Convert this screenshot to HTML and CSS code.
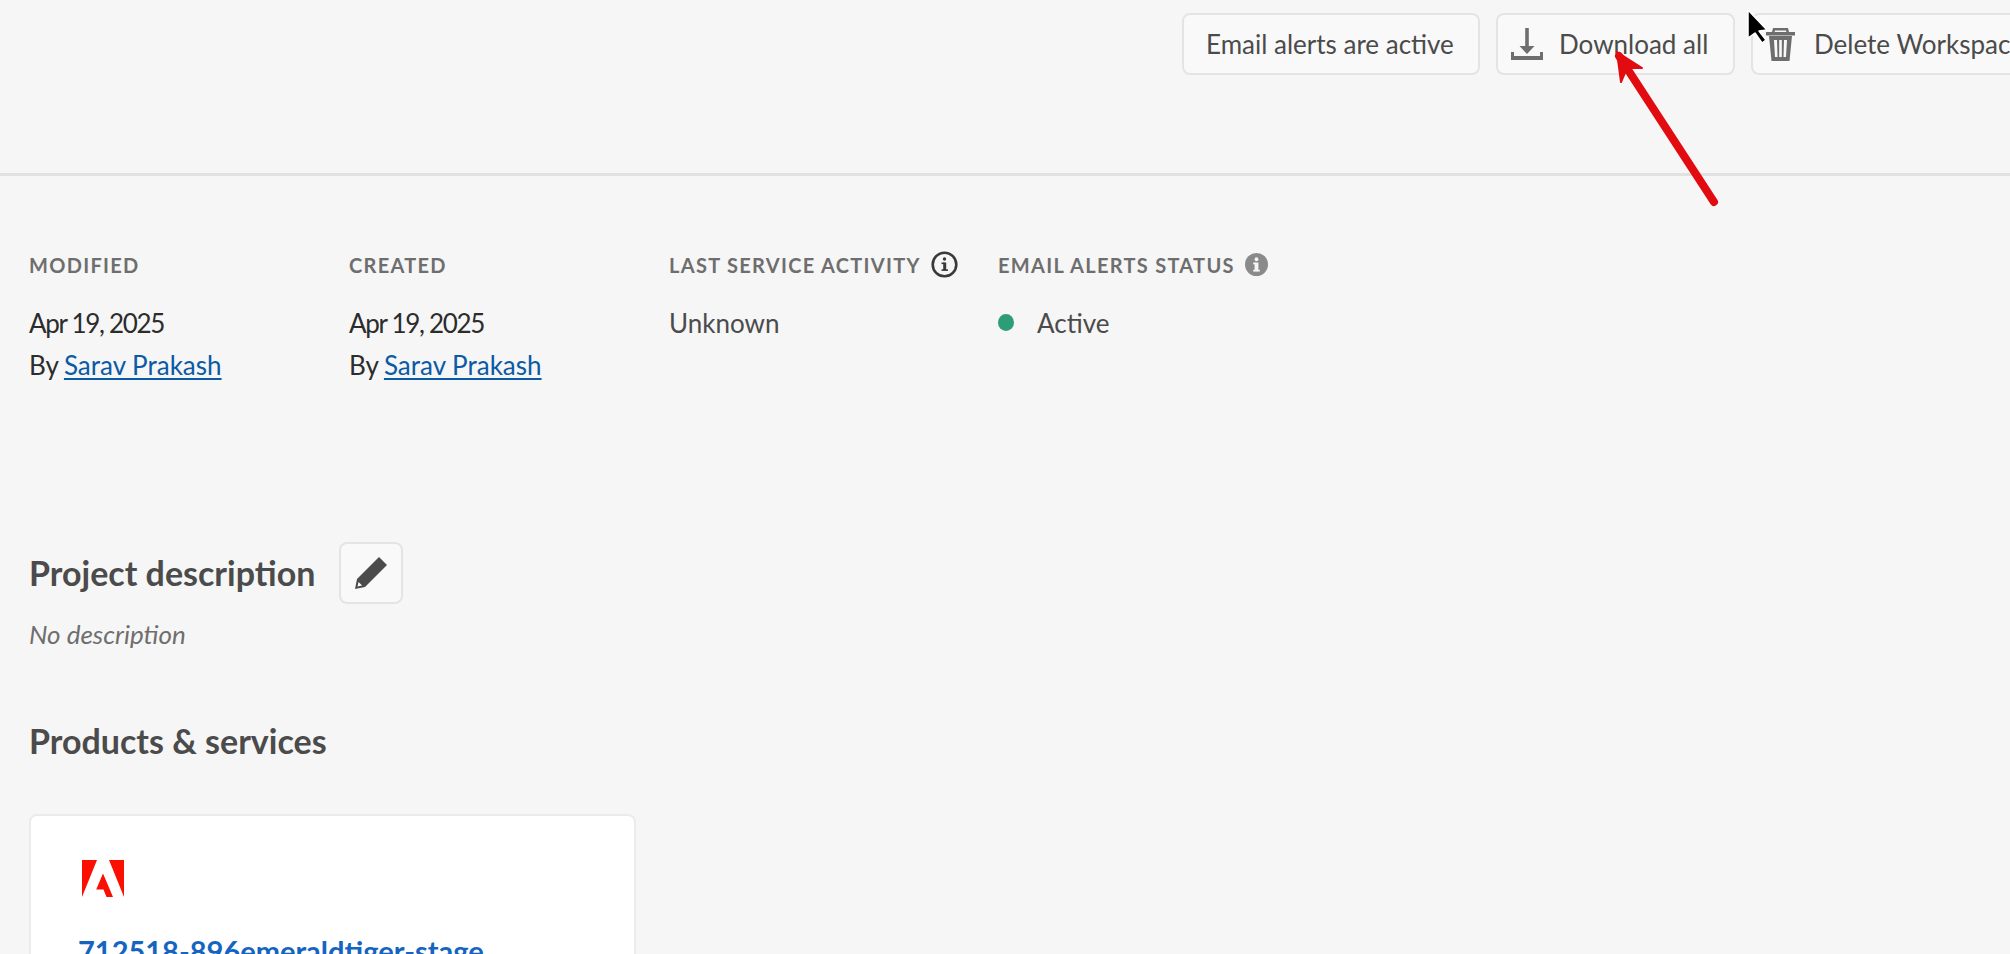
FILE: index.html
```html
<!DOCTYPE html>
<html lang="en">
<head>
<meta charset="utf-8">
<title>Workspace</title>
<link rel="stylesheet" href="styles.css">
</head>
<body>
<div class="page">
  <header class="toolbar">
    <button class="btn btn-alerts">Email alerts are active</button>
    <button class="btn btn-download">
      <svg class="icon-download" viewBox="0 0 32 32"><rect x="14.200" y="0" width="3.600" height="20"/><polygon points="8.500,18 23.500,18 16,26"/><path d="M0 24h3v4h26v-4h3v8H0z"/></svg>
      <span>Download all</span>
    </button>
    <button class="btn btn-delete">
      <svg class="icon-trash" viewBox="0 0 29 33"><path fill-rule="evenodd" d="M7 0h15l1 4h6v3.500H0V4h6zM9 2.500l-.4 1.500h11.800l-.4-1.500z"/><path fill-rule="evenodd" d="M3 8h23l-2.500 25H5.500zM8 12l1 17h2.500L11 12zM13.200 12v17h2.600V12zM18 12l-.5 17H20l1-17z"/></svg>
      <span>Delete Workspace</span>
    </button>
  </header>

  <section class="meta">
    <div class="meta-col">
      <div class="meta-label">MODIFIED</div>
      <div class="meta-value dark date">Apr 19, 2025</div>
      <div class="meta-value dark">By <a class="person" href="#">Sarav Prakash</a></div>
    </div>
    <div class="meta-col">
      <div class="meta-label">CREATED</div>
      <div class="meta-value dark date">Apr 19, 2025</div>
      <div class="meta-value dark">By <a class="person" href="#">Sarav Prakash</a></div>
    </div>
    <div class="meta-col">
      <div class="meta-label">LAST SERVICE ACTIVITY
        <svg class="icon-info" viewBox="0 0 27 27"><circle cx="13.500" cy="13.500" r="11.800" fill="none" stroke="#3a3a3a" stroke-width="2.600"/><rect x="12.200" y="11.500" width="3" height="8" fill="#3a3a3a"/><rect x="10.500" y="11.500" width="3" height="1.600" fill="#3a3a3a"/><rect x="10.500" y="18.300" width="6.500" height="1.600" fill="#3a3a3a"/><circle cx="13.500" cy="8" r="1.700" fill="#3a3a3a"/></svg>
      </div>
      <div class="meta-value">Unknown</div>
    </div>
    <div class="meta-col">
      <div class="meta-label">EMAIL ALERTS STATUS
        <svg class="icon-info-solid" viewBox="0 0 24 24"><circle cx="12" cy="12" r="12" fill="#8a8a8a"/><rect x="10" y="10" width="4" height="9" fill="#f6f6f6"/><rect x="8.500" y="10" width="3" height="1.800" fill="#f6f6f6"/><rect x="8.500" y="17.500" width="7" height="1.800" fill="#f6f6f6"/><circle cx="12" cy="6.500" r="2" fill="#f6f6f6"/></svg>
      </div>
      <div class="meta-value status"><span class="dot"></span>Active</div>
    </div>
  </section>

  <section class="content">
    <div class="desc-head">
      <h2 class="heading">Project description</h2>
      <button class="btn-edit" aria-label="Edit">
        <svg class="icon-pencil" viewBox="0 0 32 32"><path fill-rule="evenodd" d="M24 0l8 8L10 30 0 32l2-10zM3.600 25l-1.100 4.500 4.600-1z"/></svg>
      </button>
    </div>
    <p class="no-desc">No description</p>
    <h2 class="heading products">Products &amp; services</h2>
    <article class="card">
      <svg class="logo" viewBox="0 0 42 37"><path fill="#fa0f00" d="M15 0H0v37zM27 0h15v37zM21 13.500 31 37h-6.500l-3-7.500h-7.300z"/></svg>
      <a class="card-title" href="#">712518-896emeraldtiger-stage</a>
    </article>
  </section>

  <svg class="annotation" viewBox="0 0 2010 954" width="2010" height="954">
    <path d="M1714 202 L1619 56" fill="none" stroke="#e20c10" stroke-width="8" stroke-linecap="round"/>
    <path d="M1617 52 L1621 82 L1627 68 L1642 68 Z" fill="#e20c10" stroke="#e20c10" stroke-width="2" stroke-linejoin="round"/>
    <path d="M1748 10 L1748 38 L1755 33 L1762 43 L1766 40 L1759 31 L1767 30 Z" fill="#000" stroke="#fff" stroke-width="1.500" stroke-linejoin="round"/>
  </svg>
</div>
</body>
</html>
```

FILE: styles.css
```css
* {
  box-sizing: border-box;
}

html,
body {
  margin: 0;
  height: 100%;
  background: #f6f6f6;
  overflow: hidden;
}

body {
  font-family: "Lato", "Liberation Sans", sans-serif;
  color: #4b4b4b;
}

.page {
  position: relative;
  width: 2010px;
  height: 954px;
  overflow: hidden;
}

.toolbar {
  display: flex;
  align-items: flex-start;
  gap: 16px;
  height: 176px;
  padding: 13px 0 0 1182px;
  border-bottom: 3px solid #e1e1e1;
}

.btn {
  display: inline-flex;
  flex: none;
  align-items: center;
  height: 62px;
  padding: 0 22px;
  border: 2px solid #e4e4e4;
  border-radius: 8px;
  background: #f9f9f9;
  color: #4b4b4b;
  font: 400 26px "Lato", "Liberation Sans", sans-serif;
  white-space: nowrap;
}

.btn-alerts {
  width: 298px;
}

.btn-download {
  width: 239px;
  padding-left: 13px;
  gap: 16px;
}

.btn-delete {
  padding-left: 13px;
  gap: 19px;
}

.icon-download {
  flex: none;
  width: 32px;
  height: 32px;
  fill: #6e6e6e;
}

.icon-trash {
  flex: none;
  width: 29px;
  height: 33px;
  fill: #6e6e6e;
}

.meta {
  display: grid;
  grid-template-columns: 320px 320px 329px 400px;
  padding: 75px 0 0 29px;
}

.meta-label {
  display: flex;
  align-items: center;
  gap: 10px;
  height: 27px;
  margin-bottom: 24px;
  color: #6e6e6e;
  font-size: 20px;
  font-weight: 700;
  letter-spacing: 1.300px;
  white-space: nowrap;
}

.icon-info {
  width: 27px;
  height: 27px;
}

.icon-info-solid {
  width: 23px;
  height: 23px;
}

.meta-value {
  color: #4b4b4b;
  font-size: 26px;
  line-height: 42px;
}

.meta-value.dark {
  color: #2c2c2c;
}

.meta-value.date {
  letter-spacing: -1.300px;
}

.person {
  margin-left: -1px;
  color: #0b5aa5;
  text-underline-offset: 3px;
}

.status {
  display: flex;
  align-items: center;
}

.dot {
  width: 16px;
  height: 17px;
  margin-right: 23px;
  border-radius: 50%;
  background: #2d9d78;
  transform: translateY(-1px);
}

.content {
  padding: 156px 0 0 29px;
}

.desc-head {
  display: flex;
  align-items: center;
  gap: 24px;
}

.heading {
  margin: 0;
  color: #4b4b4b;
  font-size: 34px;
  font-weight: 700;
  line-height: 44px;
}

.btn-edit {
  display: flex;
  align-items: center;
  justify-content: center;
  width: 64px;
  height: 62px;
  padding: 0;
  border: 2px solid #e4e4e4;
  border-radius: 8px;
  background: #f9f9f9;
}

.icon-pencil {
  width: 32px;
  height: 32px;
  fill: #4b4b4b;
}

.no-desc {
  margin: 9px 0 0;
  color: #6e6e6e;
  font-size: 26px;
  font-style: italic;
  line-height: 42px;
}

.products {
  margin-top: 64px;
}

.card {
  width: 607px;
  height: 300px;
  margin-top: 51px;
  padding: 44px 47px;
  border: 2px solid #ebebeb;
  border-radius: 8px;
  background: #fff;
}

.logo {
  display: block;
  width: 42px;
  height: 37px;
  margin-left: 4px;
}

.card-title {
  display: block;
  margin-top: 36px;
  color: #1565c0;
  font-size: 29px;
  font-weight: 700;
  line-height: 36px;
  text-decoration: none;
}

.annotation {
  position: absolute;
  top: 0;
  left: 0;
  pointer-events: none;
}
```
